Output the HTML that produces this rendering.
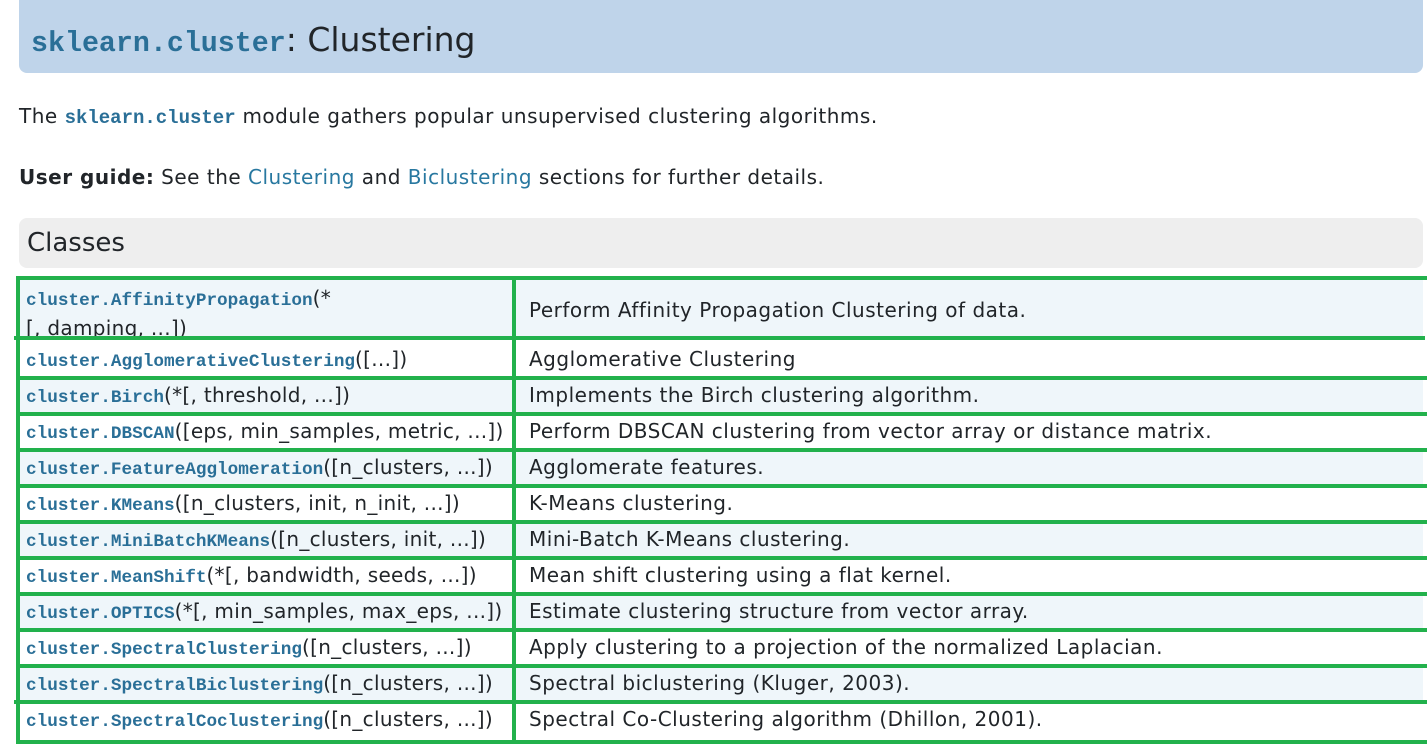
<!DOCTYPE html>
<html><head><meta charset="utf-8"><style>
body{margin:0;width:1427px;height:750px;background:#fff;font-family:"DejaVu Sans",sans-serif;color:#212529;position:relative;overflow:hidden}
.h1{position:absolute;left:19px;top:0;width:1404px;height:73px;background:#bfd4ea;border-radius:0 0 8px 8px}
.h1 .t{position:absolute;left:12px;top:20px;font-size:33px;color:#212529;white-space:nowrap}
.mono{font-family:"Liberation Mono",monospace;font-weight:bold;color:#2a6f97;letter-spacing:0}
p{position:absolute;left:19px;margin:0;font-size:20px;white-space:nowrap;letter-spacing:0.5px}
a{color:#2878a0;text-decoration:none}
.cls{position:absolute;left:19px;top:218px;width:1404px;height:50px;background:#eeeeee;border-radius:8px}
.cls span{position:absolute;left:8px;top:10px;font-size:26px}
.row{position:absolute;left:19px;width:1404px;overflow:hidden}
.row.b{background:#eff6fa}
.c1{position:absolute;left:7px;font-size:20px;white-space:nowrap;letter-spacing:0.3px}
.c1 .mono{font-size:17.7px}
.c2{position:absolute;left:510px;font-size:20px;white-space:nowrap;letter-spacing:0.5px}
.g{position:absolute;background:#22b14c}
</style></head><body>
<div class="h1"><div class="t"><span class="mono" style="font-size:28.3px">sklearn.cluster</span>: Clustering</div></div>
<p style="top:104px">The <span class="mono" style="font-size:19px">sklearn.cluster</span> module gathers popular unsupervised clustering algorithms.</p>
<p style="top:165px"><b>User guide:</b> See the <a>Clustering</a> and <a>Biclustering</a> sections for further details.</p>
<div class="cls"><span>Classes</span></div>

<div class="row b" style="top:280px;height:56px"><div class="c1" style="top:5px;line-height:27px"><span class="mono">cluster.AffinityPropagation</span>(*<br>[, damping, ...])</div><div class="c2" style="top:18px">Perform Affinity Propagation Clustering of data.</div></div>
<div class="row" style="top:340px;height:36px"><div class="c1" style="top:7px"><span class="mono">cluster.AgglomerativeClustering</span>([...])</div><div class="c2" style="top:7px">Agglomerative Clustering</div></div>
<div class="row b" style="top:380px;height:32px"><div class="c1" style="top:3px"><span class="mono">cluster.Birch</span>(*[, threshold, ...])</div><div class="c2" style="top:3px">Implements the Birch clustering algorithm.</div></div>
<div class="row" style="top:416px;height:32px"><div class="c1" style="top:3px"><span class="mono">cluster.DBSCAN</span>([eps, min_samples, metric, ...])</div><div class="c2" style="top:3px">Perform DBSCAN clustering from vector array or distance matrix.</div></div>
<div class="row b" style="top:452px;height:32px"><div class="c1" style="top:3px"><span class="mono">cluster.FeatureAgglomeration</span>([n_clusters, ...])</div><div class="c2" style="top:3px">Agglomerate features.</div></div>
<div class="row" style="top:488px;height:32px"><div class="c1" style="top:3px"><span class="mono">cluster.KMeans</span>([n_clusters, init, n_init, ...])</div><div class="c2" style="top:3px">K-Means clustering.</div></div>
<div class="row b" style="top:524px;height:32px"><div class="c1" style="top:3px"><span class="mono">cluster.MiniBatchKMeans</span>([n_clusters, init, ...])</div><div class="c2" style="top:3px">Mini-Batch K-Means clustering.</div></div>
<div class="row" style="top:560px;height:32px"><div class="c1" style="top:3px"><span class="mono">cluster.MeanShift</span>(*[, bandwidth, seeds, ...])</div><div class="c2" style="top:3px">Mean shift clustering using a flat kernel.</div></div>
<div class="row b" style="top:596px;height:32px"><div class="c1" style="top:3px"><span class="mono">cluster.OPTICS</span>(*[, min_samples, max_eps, ...])</div><div class="c2" style="top:3px">Estimate clustering structure from vector array.</div></div>
<div class="row" style="top:632px;height:32px"><div class="c1" style="top:3px"><span class="mono">cluster.SpectralClustering</span>([n_clusters, ...])</div><div class="c2" style="top:3px">Apply clustering to a projection of the normalized Laplacian.</div></div>
<div class="row b" style="top:668px;height:32px"><div class="c1" style="top:3px"><span class="mono">cluster.SpectralBiclustering</span>([n_clusters, ...])</div><div class="c2" style="top:3px">Spectral biclustering (Kluger, 2003).</div></div>
<div class="row" style="top:704px;height:36px"><div class="c1" style="top:3px"><span class="mono">cluster.SpectralCoclustering</span>([n_clusters, ...])</div><div class="c2" style="top:3px">Spectral Co-Clustering algorithm (Dhillon, 2001).</div></div>

<div class="g" style="left:16px;top:276px;width:1411px;height:4px"></div>
<div class="g" style="left:14px;top:336px;width:1411px;height:4px"></div>
<div class="g" style="left:16px;top:376px;width:1411px;height:4px"></div>
<div class="g" style="left:16px;top:412px;width:1411px;height:4px"></div>
<div class="g" style="left:16px;top:448px;width:1411px;height:4px"></div>
<div class="g" style="left:16px;top:484px;width:1411px;height:4px"></div>
<div class="g" style="left:16px;top:520px;width:1411px;height:4px"></div>
<div class="g" style="left:16px;top:556px;width:1411px;height:4px"></div>
<div class="g" style="left:16px;top:592px;width:1411px;height:4px"></div>
<div class="g" style="left:16px;top:628px;width:1411px;height:4px"></div>
<div class="g" style="left:16px;top:664px;width:1411px;height:4px"></div>
<div class="g" style="left:14px;top:700px;width:1413px;height:4px"></div>
<div class="g" style="left:16px;top:740px;width:1411px;height:4px"></div>
<div class="g" style="left:16px;top:276px;width:4px;height:468px"></div>
<div class="g" style="left:512px;top:276px;width:4px;height:468px"></div>
</body></html>
